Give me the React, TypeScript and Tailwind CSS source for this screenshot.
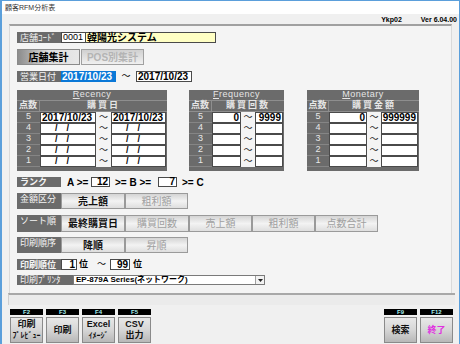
import type { ReactNode } from "react";

const dark = "bg-[#6b6b6b]";

function Label({ children, w = "w-[44px]", h = "h-full", center = false }: { children: ReactNode; w?: string; h?: string; center?: boolean }) {
  return (
    <div className={`${w} ${h} ${dark} text-[#f4f4f4] text-[9px] leading-[10px] pl-[3px] flex ${center ? "items-center" : "items-start pt-[1px]"} shrink-0`}>
      {children}
    </div>
  );
}

function Btn({ label, on = false, w = "w-[64px]" }: { label: string; on?: boolean; w?: string }) {
  return (
    <div
      className={`${w} h-full shrink-0 border border-[#9a9a9a] bg-linear-to-b from-[#d4d4d4] via-[#f3f3f3] to-[#dedede] flex items-center justify-center text-[10px] ${
        on ? "text-[#111] font-bold" : "text-[#a0a0a0]"
      }`}
    >
      {label}
    </div>
  );
}

function Box({ w, children, right = true, h = "h-full" }: { w: string; children?: ReactNode; right?: boolean; h?: string }) {
  return (
    <div className={`${w} ${h} shrink-0 bg-white border border-[#4a4a4a] flex items-center ${right ? "justify-end pr-[1px]" : "justify-start pl-[1px]"} text-[10px] font-bold leading-none text-black`}>
      {children}
    </div>
  );
}

function Tilde({ w }: { w: string }) {
  return <div className={`${w} h-full shrink-0 bg-[#f4f4f4] flex items-center justify-center text-[9px] text-[#222]`}>～</div>;
}

type TableProps = {
  title: string;
  sub: string;
  w: string;
  ptW: string;
  aW: string;
  tW: string;
  bW: string;
  rows: [ReactNode, ReactNode][];
  right?: boolean;
};

function RTable({ title, sub, w, ptW, aW, tW, bW, rows, right = true }: TableProps) {
  return (
    <div className={`${w} h-[81px] ${dark} flex flex-col shrink-0`}>
      <div className="h-[11px] border-b border-[#8e8e8e] flex items-center justify-center text-[9px] text-[#e6e6e6] tracking-[0.5px]">
        <span className="underline">{title[0]}</span>
        {title.slice(1)}
      </div>
      <div className="h-[11px] flex border-b border-[#8e8e8e] text-[9px] text-[#e6e6e6] font-bold">
        <div className={`${ptW} border-r border-[#8e8e8e] flex items-center justify-center`}>点数</div>
        <div className="flex-1 flex items-center justify-center tracking-[2px]">{sub}</div>
      </div>
      {rows.map((r, i) => (
        <div key={i} className="h-[11px] flex">
          <div className={`${ptW} shrink-0 border-b border-[#858585] flex items-center justify-center text-[9px] text-[#e8e8e8]`}>{5 - i}</div>
          <Box w={aW} right={right}>{r[0]}</Box>
          <Tilde w={tW} />
          <Box w={bW} right={right}>{r[1]}</Box>
        </div>
      ))}
    </div>
  );
}

const emptyDate = (
  <span className="text-[9px]">
    <span className="ml-[13px]">/</span>
    <span className="ml-[9px]">/</span>
  </span>
);

function FKey({ k, children, color = "text-[#111]" }: { k: string; children: ReactNode; color?: string }) {
  return (
    <div className="w-[33px] flex flex-col shrink-0">
      <div className="h-[6px] bg-black text-[#a8f0f0] text-[6px] leading-[6px] font-bold text-center">{k}</div>
      <div className={`mt-[2px] h-[26px] border border-[#8a8a8a] bg-linear-to-b from-[#e8e8e8] via-[#d6d6d6] to-[#b8b8b8] flex flex-col items-center justify-center text-[9px] leading-[11px] font-bold ${color}`}>
        {children}
      </div>
    </div>
  );
}

export default function App() {
  return (
    <div className="w-[460px] h-[344px] overflow-hidden bg-[#f0f0f0] border-l-2 border-t border-r border-[#5b9fdb] flex flex-col font-['Liberation_Sans','Noto_Sans_CJK_JP',sans-serif] text-black">
      <div className="h-[13px] bg-white text-[7px] leading-[13px] pl-[3px] text-[#333]">顧客RFM分析表</div>
      <div className="h-[10px] flex justify-end items-end gap-[19px] text-[7px] leading-[8px] font-bold pr-[2px]">
        <span>Ykp02</span>
        <span>Ver 6.04.00</span>
      </div>

      <div className="ml-[7px] w-[443px] h-[269px] border-t-2 border-x border-t-[#a0a0a0] border-x-[#dadada] bg-[#f4f4f4] pl-[7px] pt-[6px] flex flex-col">
        {/* 店舗コード */}
        <div className="h-[11px] flex">
          <Label w="w-[44px]" center>店舗ｺｰﾄﾞ</Label>
          <Box w="w-[25px]" right={false}>
            <span className="font-normal text-[9px]">0001</span>
          </Box>
          <div className="w-[130px] h-full bg-[#ffffc4] border border-[#4a4a4a] border-l-0 text-[10px] font-bold leading-none flex items-center pl-[1px]">韓陽光システム</div>
        </div>

        <div className="h-[16px] mt-[6px] flex gap-[1px]">
          <div className="w-[63px] h-full border border-[#8a8a8a] bg-linear-to-r from-[#8c8c8c] via-[#dedede] to-[#e8e8e8] flex items-center justify-center text-[10px] font-bold">店舗集計</div>
          <div className="w-[63px] h-full border border-[#a0a0a0] bg-linear-to-b from-[#d0d0d0] to-[#f0f0f0] flex items-center justify-center text-[10px] font-bold text-[#b4b4b4]">POS別集計</div>
        </div>

        {/* 営業日付 */}
        <div className="h-[11px] mt-[6px] flex items-center">
          <Label center>営業日付</Label>
          <div className="w-[55px] h-full bg-[#0a78d7] text-white text-[10px] font-bold leading-none flex items-center pl-[1px]">2017/10/23</div>
          <div className="w-[20px] text-center text-[9px]">～</div>
          <Box w="w-[56px]" right={false}>2017/10/23</Box>
        </div>

        {/* tables */}
        <div className="mt-[8px] flex">
          <RTable
            title="Recency"
            sub="購買日"
            w="w-[150px]"
            ptW="w-[23px]"
            aW="w-[56px]"
            tW="w-[15px]"
            bW="w-[55px]"
            right={false}
            rows={[
              ["2017/10/23", "2017/10/23"],
              [emptyDate, emptyDate],
              [emptyDate, emptyDate],
              [emptyDate, emptyDate],
              [emptyDate, emptyDate],
            ]}
          />
          <div className="w-[22px]" />
          <RTable
            title="Frequency"
            sub="購買回数"
            w="w-[95px]"
            ptW="w-[23px]"
            aW="w-[29px]"
            tW="w-[14px]"
            bW="w-[28px]"
            rows={[["0", "9999"], ["", ""], ["", ""], ["", ""], ["", ""]]}
          />
          <div className="w-[23px]" />
          <RTable
            title="Monetary"
            sub="購買金額"
            w="w-[112px]"
            ptW="w-[22px]"
            aW="w-[38px]"
            tW="w-[14px]"
            bW="w-[37px]"
            rows={[["0", "999999"], ["", ""], ["", ""], ["", ""], ["", ""]]}
          />
        </div>

        {/* ランク */}
        <div className="h-[10px] mt-[6px] flex items-center text-[10px] font-bold">
          <Label center>ランク</Label>
          <span className="w-[30px] pl-[6px]">A &gt;=</span>
          <Box w="w-[19px]">12</Box>
          <span className="w-[48px] pl-[5px]">&gt;= B &gt;=</span>
          <Box w="w-[19px]">7</Box>
          <span className="pl-[5px]">&gt;= C</span>
        </div>

        <div className="h-[16px] mt-[6px] flex">
          <Label>金額区分</Label>
          <Btn label="売上額" on />
          <Btn label="粗利額" w="w-[63px]" />
        </div>

        <div className="h-[17px] mt-[6px] flex">
          <Label>ソート順</Label>
          <Btn label="最終購買日" on />
          <Btn label="購買回数" />
          <Btn label="売上額" w="w-[63px]" />
          <Btn label="粗利額" w="w-[63px]" />
          <Btn label="点数合計" w="w-[63px]" />
        </div>

        <div className="h-[16px] mt-[5px] flex">
          <Label>印刷順序</Label>
          <Btn label="降順" on />
          <Btn label="昇順" w="w-[63px]" />
        </div>

        <div className="h-[11px] mt-[6px] flex items-center text-[9px] font-bold">
          <Label center>印刷順位</Label>
          <Box w="w-[16px]">1</Box>
          <span className="pl-[2px] w-[16px]">位</span>
          <span className="w-[17px] text-center font-normal">～</span>
          <Box w="w-[20px]">99</Box>
          <span className="pl-[3px]">位</span>
        </div>

        <div className="h-[10px] mt-[5px] flex items-center">
          <Label w="w-[56px]" center>印刷ﾌﾟﾘﾝﾀ</Label>
          <div className="w-[192px] h-full bg-white border border-[#7a7a7a] flex items-center text-[8px] font-bold leading-none">
            <span className="flex-1 pl-[2px]">EP-879A Series(ネットワーク)</span>
            <span className="w-[9px] h-full border-l border-[#a0a0a0] bg-[#f2f2f2] flex items-center justify-center">
              <svg width="5" height="3" viewBox="0 0 5 3">
                <path d="M0 0 H5 L2.5 3 Z" fill="#222" />
              </svg>
            </span>
          </div>
        </div>
      </div>

      {/* status bar */}
      <div className="ml-[6px] w-[447px] h-[12px] border-t-2 border-l border-t-[#a8a8a8] border-l-[#cfcfcf] bg-[#ebebeb]" />

      {/* function keys */}
      <div className="mt-[4px] flex pl-[8px] pr-[6px]">
        <div className="flex gap-[3px]">
          <FKey k="F2">
            <span>印刷</span>
            <span className="text-[8px]">ﾌﾟﾚﾋﾞｭｰ</span>
          </FKey>
          <FKey k="F3">
            <span>印刷</span>
          </FKey>
          <FKey k="F4">
            <span>Excel</span>
            <span className="text-[8px]">ｲﾒｰｼﾞ</span>
          </FKey>
          <FKey k="F5">
            <span>CSV</span>
            <span>出力</span>
          </FKey>
        </div>
        <div className="flex-1" />
        <div className="flex gap-[3px]">
          <FKey k="F9">
            <span>検索</span>
          </FKey>
          <FKey k="F12" color="text-[#e030e0]">
            <span>終了</span>
          </FKey>
        </div>
      </div>
    </div>
  );
}
